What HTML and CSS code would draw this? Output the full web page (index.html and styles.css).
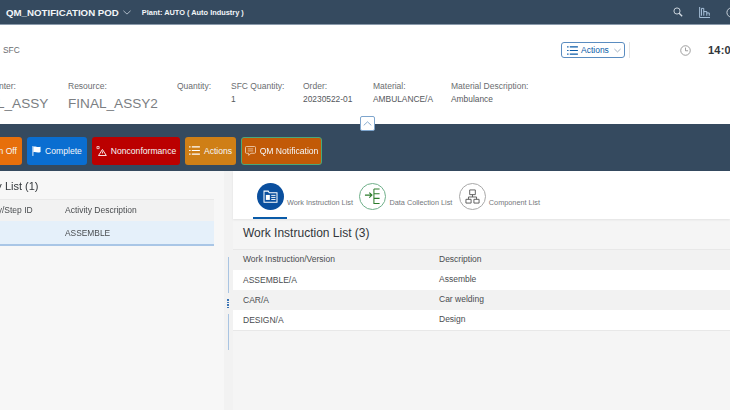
FILE: index.html
```html
<!DOCTYPE html>
<html lang="en">
<head>
<meta charset="utf-8">
<title>QM_NOTIFICATION POD</title>
<link rel="stylesheet" href="styles.css">
</head>
<body>
<div class="page">
  <header class="shell">
    <span class="shell-title">QM_NOTIFICATION POD</span>
    <svg class="chev" viewBox="0 0 10 6" width="8" height="5"><path d="M.5.8 5 5 9.500.8" fill="none" stroke="#c9d3dd" stroke-width="1"/></svg>
    <span class="plant">Plant: AUTO ( Auto Industry )</span>
    <div class="shell-icons">
      <svg viewBox="0 0 12 12" width="10" height="10"><circle cx="4.800" cy="4.800" r="3.700" fill="none" stroke="#d5dde5" stroke-width="1.100"/><path d="M7.400 7.400 11 11" stroke="#d5dde5" stroke-width="1.600"/></svg>
      <svg viewBox="0 0 12 12" width="11" height="11"><path d="M.7 0V11.500H12M2.700 9.500V1.500H5.200V9.500M5.200 5H8.500V9.500M8.500 6.500H11.200V9.500" fill="none" stroke="#b4cde6" stroke-width="1"/></svg>
      <svg viewBox="0 0 12 12" width="11" height="11"><circle cx="6" cy="6" r="5" fill="none" stroke="#d5dde5" stroke-width="1"/></svg>
    </div>
  </header>

  <section class="object">
    <div class="title-row">
      <span class="sfc">SFC</span>
      <button class="act-btn">
        <svg viewBox="0 0 12 10" width="11" height="9"><path d="M0 1h1.600M3 1h9M0 5h1.600M3 5h9M0 9h1.600M3 9h9" stroke="#0a5ba8" stroke-width="1.300"/></svg>
        <span>Actions</span>
        <svg viewBox="0 0 10 6" width="7" height="5"><path d="M.5.8 5 5 9.500.8" fill="none" stroke="#7f93a8" stroke-width="1"/></svg>
      </button>
      <span class="divider"></span>
      <svg class="clock" viewBox="0 0 12 12" width="11" height="11"><circle cx="6" cy="6" r="5.200" fill="none" stroke="#8b8b8b" stroke-width=".9"/><path d="M6 2.800V6.300H8.800" fill="none" stroke="#8b8b8b" stroke-width=".9"/></svg>
      <span class="time">14:00</span>
    </div>
    <div class="attrs">
      <div class="attr a-center"><span class="lbl">Work Center:</span><span class="big">FINAL_ASSY</span></div>
      <div class="attr a-res"><span class="lbl">Resource:</span><span class="big">FINAL_ASSY2</span></div>
      <div class="attr a-qty"><span class="lbl">Quantity:</span></div>
      <div class="attr a-sfc"><span class="lbl">SFC Quantity:</span><span class="val">1</span></div>
      <div class="attr a-ord"><span class="lbl">Order:</span><span class="val">20230522-01</span></div>
      <div class="attr a-mat"><span class="lbl">Material:</span><span class="val">AMBULANCE/A</span></div>
      <div class="attr"><span class="lbl">Material Description:</span><span class="val">Ambulance</span></div>
    </div>
    <button class="collapse"><svg viewBox="0 0 10 6" width="9" height="5"><path d="M.5 5.200 5 1 9.500 5.200" fill="none" stroke="#7ea5cd" stroke-width="1.100"/></svg></button>
  </section>

  <nav class="toolbar">
    <button class="tb orange signoff">Sign Off</button>
    <button class="tb blue">
      <svg viewBox="0 0 10 11" width="9" height="10"><path d="M1 0V11" stroke="#fff" stroke-width="1"/><path d="M1.500.7C4 0 6 2 9.500.7V6.500C6 8 4 6 1.500 6.800Z" fill="#fff"/></svg>
      Complete</button>
    <button class="tb red">
      <svg viewBox="0 0 12 11" width="11" height="10"><path d="M1 .5h2.400v2.400H1Z" fill="none" stroke="#fff" stroke-width=".8"/><path d="M7 3.800 11.300 10.500H2.700Z" fill="none" stroke="#fff" stroke-width="1"/><path d="M7 6V8.300" stroke="#fff"/></svg>
      Nonconformance</button>
    <button class="tb amber">
      <svg viewBox="0 0 12 10" width="11" height="9"><path d="M0 1h1.600M3 1h9M0 5h1.600M3 5h9M0 9h1.600M3 9h9" stroke="#fff" stroke-width="1.200"/></svg>
      Actions</button>
    <button class="tb burnt">
      <svg viewBox="0 0 12 11" width="11" height="10"><path d="M1.500.6h9a1 1 0 0 1 1 1V7a1 1 0 0 1-1 1H6.500L4 10.300V8H1.500a1 1 0 0 1-1-1V1.600a1 1 0 0 1 1-1Z" fill="none" stroke="#f4d9c0" stroke-width=".9"/><path d="M3 3.200h6M3 5.400h6" stroke="#f4d9c0" stroke-width=".8"/></svg>
      QM Notification</button>
  </nav>

  <main class="work">
    <section class="left">
      <h2 class="left-title">Activity List (1)</h2>
      <div class="l-head"><span class="c1">Activity/Step ID</span><span>Activity Description</span></div>
      <div class="l-row"><span class="c1"></span><span>ASSEMBLE</span></div>
    </section>

    <div class="gutter">
      <span class="gl"></span>
      <span class="grip"><i></i><i></i><i></i><i></i></span>
      <span class="gl"></span>
    </div>

    <section class="right">
      <div class="tabs">
        <div class="tab">
          <span class="tab-ic">
            <svg viewBox="0 0 16 14" width="15" height="13"><path d="M1 3V1.200h4.600L6.600 3H15v10.200H1Z" fill="none" stroke="#fff" stroke-width="1.100"/><path d="M3 5.300h4.300v5.400H3Z" fill="#fff"/><path d="M8.800 5.800h4.600M8.800 8h4.600M8.800 10.200h4.600" stroke="#fff" stroke-width="1"/></svg>
          </span>
          <span class="tab-tx">Work Instruction List</span>
          <span class="ink"></span>
        </div>
        <div class="tab">
          <span class="tab-ic green">
            <svg viewBox="0 0 18 18" width="17" height="17"><path d="M1 7.500h7M5.600 4.800 8.400 7.500 5.600 10.200" fill="none" stroke="#2b7c2b" stroke-width="1.200"/><path d="M10.500 1V16.500H16.500M10.500 1h6M10.500 6h6M10.500 11h6" fill="none" stroke="#2b7c2b" stroke-width="1.100"/></svg>
          </span>
          <span class="tab-tx">Data Collection List</span>
        </div>
        <div class="tab">
          <span class="tab-ic grey">
            <svg viewBox="0 0 16 16" width="15" height="15"><path d="M5 1h6v5H5ZM1 11h5.500v4H1ZM9.500 11H15v4H9.500ZM8 6V8.500M3.700 11V8.500H12.300V11" fill="none" stroke="#5a5a5a" stroke-width="1"/></svg>
          </span>
          <span class="tab-tx">Component List</span>
        </div>
      </div>
      <h2 class="r-title">Work Instruction List (3)</h2>
      <div class="r-table">
        <div class="r-row head"><span class="rc1">Work Instruction/Version</span><span>Description</span></div>
        <div class="r-row"><span class="rc1">ASSEMBLE/A</span><span class="up">Assemble</span></div>
        <div class="r-row alt"><span class="rc1">CAR/A</span><span class="up">Car welding</span></div>
        <div class="r-row"><span class="rc1">DESIGN/A</span><span class="up">Design</span></div>
      </div>
    </section>
  </main>
</div>
</body>
</html>
```
FILE: styles.css
```css
* { box-sizing: border-box; }
html, body { margin: 0; padding: 0; width: 730px; height: 410px; overflow: hidden; }
body { font-family: "Liberation Sans", Arial, sans-serif; color: #32363a; background: #f7f7f7; }
button { font-family: inherit; cursor: pointer; }
h2 { margin: 0; font-weight: 400; }

.page { width: 730px; height: 410px; display: flex; flex-direction: column; overflow: hidden; filter: blur(.35px); }

.shell { height: 25px; flex: none; background: #354a5f; border-bottom: 1px solid #8a9aab; display: flex; align-items: center; padding-left: 6px; color: #fff; }
.shell-title { font-size: 9.700px; font-weight: 700; color: #f2f5f8; }
.chev { margin-left: 4px; }
.plant { margin-left: 11px; font-size: 7.400px; font-weight: 700; color: #f2f5f8; }
.shell-icons { margin-left: auto; display: flex; align-items: center; gap: 16px; margin-right: -7px; }

.object { height: 99px; flex: none; background: #fff; position: relative; display: flex; flex-direction: column; }
.title-row { height: 52px; display: flex; align-items: center; padding: 0 0 2px 3px; flex: none; }
.title-row > * { flex: none; }
.sfc { font-size: 8.400px; color: #6a6d70; width: 558px; }
.act-btn { width: 64px; height: 16px; padding: 0 0 0 5px; display: flex; align-items: center; gap: 3px; background: #fff; border: 1px solid #5a8cc0; border-radius: 3px; color: #0a5ba8; font-size: 8.500px; }
.act-btn span { margin-right: 2px; }
.divider { width: 1px; height: 16px; background: #e5e5e5; margin: 0 50px 0 4px; }
.clock { margin-right: 17px; }
.time { font-size: 11px; font-weight: 700; color: #32363a; letter-spacing: .2px; white-space: nowrap; }

.attrs { display: flex; margin: 4px 0 0 -34px; }
.attr { display: flex; flex-direction: column; }
.a-center { width: 102px; }
.a-res { width: 109px; }
.a-qty { width: 54px; }
.a-sfc { width: 72px; }
.a-ord { width: 70px; }
.a-mat { width: 78px; }
.lbl { font-size: 8.500px; line-height: 11px; color: #6a6d70; white-space: nowrap; }
.val { font-size: 8.400px; line-height: 11px; color: #55585c; margin-top: 2px; white-space: nowrap; }
.big { font-size: 13.600px; line-height: 18px; color: #7b7e82; margin-top: 3px; white-space: nowrap; }

.collapse { position: absolute; left: 360px; bottom: -7px; width: 15px; height: 15px; padding: 0; background: #fff; border: 1px solid #7ea5cd; border-radius: 2px; display: flex; align-items: center; justify-content: center; z-index: 2; }

.toolbar { height: 47px; flex: none; background: #354a5f; display: flex; align-items: center; gap: 5px; padding: 6px 0 0 0; }
.tb { height: 28px; flex: none; border: 1px solid transparent; border-radius: 3px; color: #f4f7fa; font-size: 8.600px; display: flex; align-items: center; justify-content: center; gap: 4px; padding: 0; white-space: nowrap; }
.signoff { width: 36px; margin-left: -14px; justify-content: flex-end; padding-right: 4px; }
.orange { background: #e76f0b; }
.blue { background: #0a6ed1; width: 60px; }
.red { background: #bb0000; width: 88px; }
.amber { background: #cf7f16; width: 51px; }
.burnt { background: #c25a07; width: 81px; border-color: #4aa878; }

.work { flex: 1; display: flex; min-height: 0; }
.left { width: 224px; flex: none; padding-right: 10px; background: #f7f7f7; overflow: hidden; }
.left-title { font-size: 11px; height: 28px; line-height: 30px; margin-left: -33px; white-space: nowrap; color: #32363a; }
.l-head, .l-row { display: flex; align-items: center; font-size: 8.500px; color: #4a4d50; white-space: nowrap; }
.l-head { height: 22px; background: #f2f2f2; border-top: 1px solid #e9e9e9; padding-bottom: 1px; }
.l-row { height: 25px; background: #e5f0fa; border-bottom: 2px solid #a9c6e6; font-size: 8.400px; }
.c1 { width: 65px; margin-left: -25px; margin-right: 25px; flex: none; }

.gutter { width: 9px; flex: none; display: flex; flex-direction: column; align-items: flex-end; padding: 86px 4px 0 0; background: #f2f2f2; }
.gl { width: 1px; height: 36px; background: #a9c4e2; }
.grip { display: flex; flex-direction: column; gap: 1px; padding: 6px 0; width: 2px; }
.grip i { display: block; width: 1.500px; height: 1.500px; background: #3a74b5; }

.right { flex: 1; min-width: 0; background: #f5f5f5; display: flex; flex-direction: column; }
.tabs { height: 48px; flex: none; background: #fff; display: flex; padding-left: 24px; gap: 6.500px; box-shadow: 0 1px 2px rgba(0,0,0,.08); position: relative; }
.tab { display: flex; align-items: flex-start; padding-top: 12px; position: relative; height: 48px; }
.tab-ic { width: 27px; height: 27px; border-radius: 50%; background: #0a4f9e; display: flex; align-items: center; justify-content: center; flex: none; }
.tab-ic.green { background: #fff; border: 1px solid #6fb08a; }
.tab-ic.grey { background: #fff; border: 1px solid #a8a8a8; }
.tab-tx { font-size: 7.300px; color: #75787c; margin: 15px 0 0 3px; white-space: nowrap; line-height: 10px; }
.ink { position: absolute; left: -4px; bottom: 0; width: 34px; height: 2px; background: #0a5ba8; }
.r-title { font-size: 12px; height: 30px; line-height: 28px; padding-left: 10px; flex: none; color: #32363a; }
.r-table { font-size: 8.500px; color: #4a4d50; border-bottom: 1px solid #e8e8e8; }
.r-row { height: 20.300px; display: flex; align-items: center; background: #fff; padding-left: 10px; white-space: nowrap; }
.r-row.head { background: #f2f2f2; border-top: 1px solid #e8e8e8; height: 20.500px; padding-bottom: 2px; }
.r-row.alt { background: #f2f2f2; }
.rc1 { width: 196px; flex: none; }
.up { margin-top: -2px; }
```
